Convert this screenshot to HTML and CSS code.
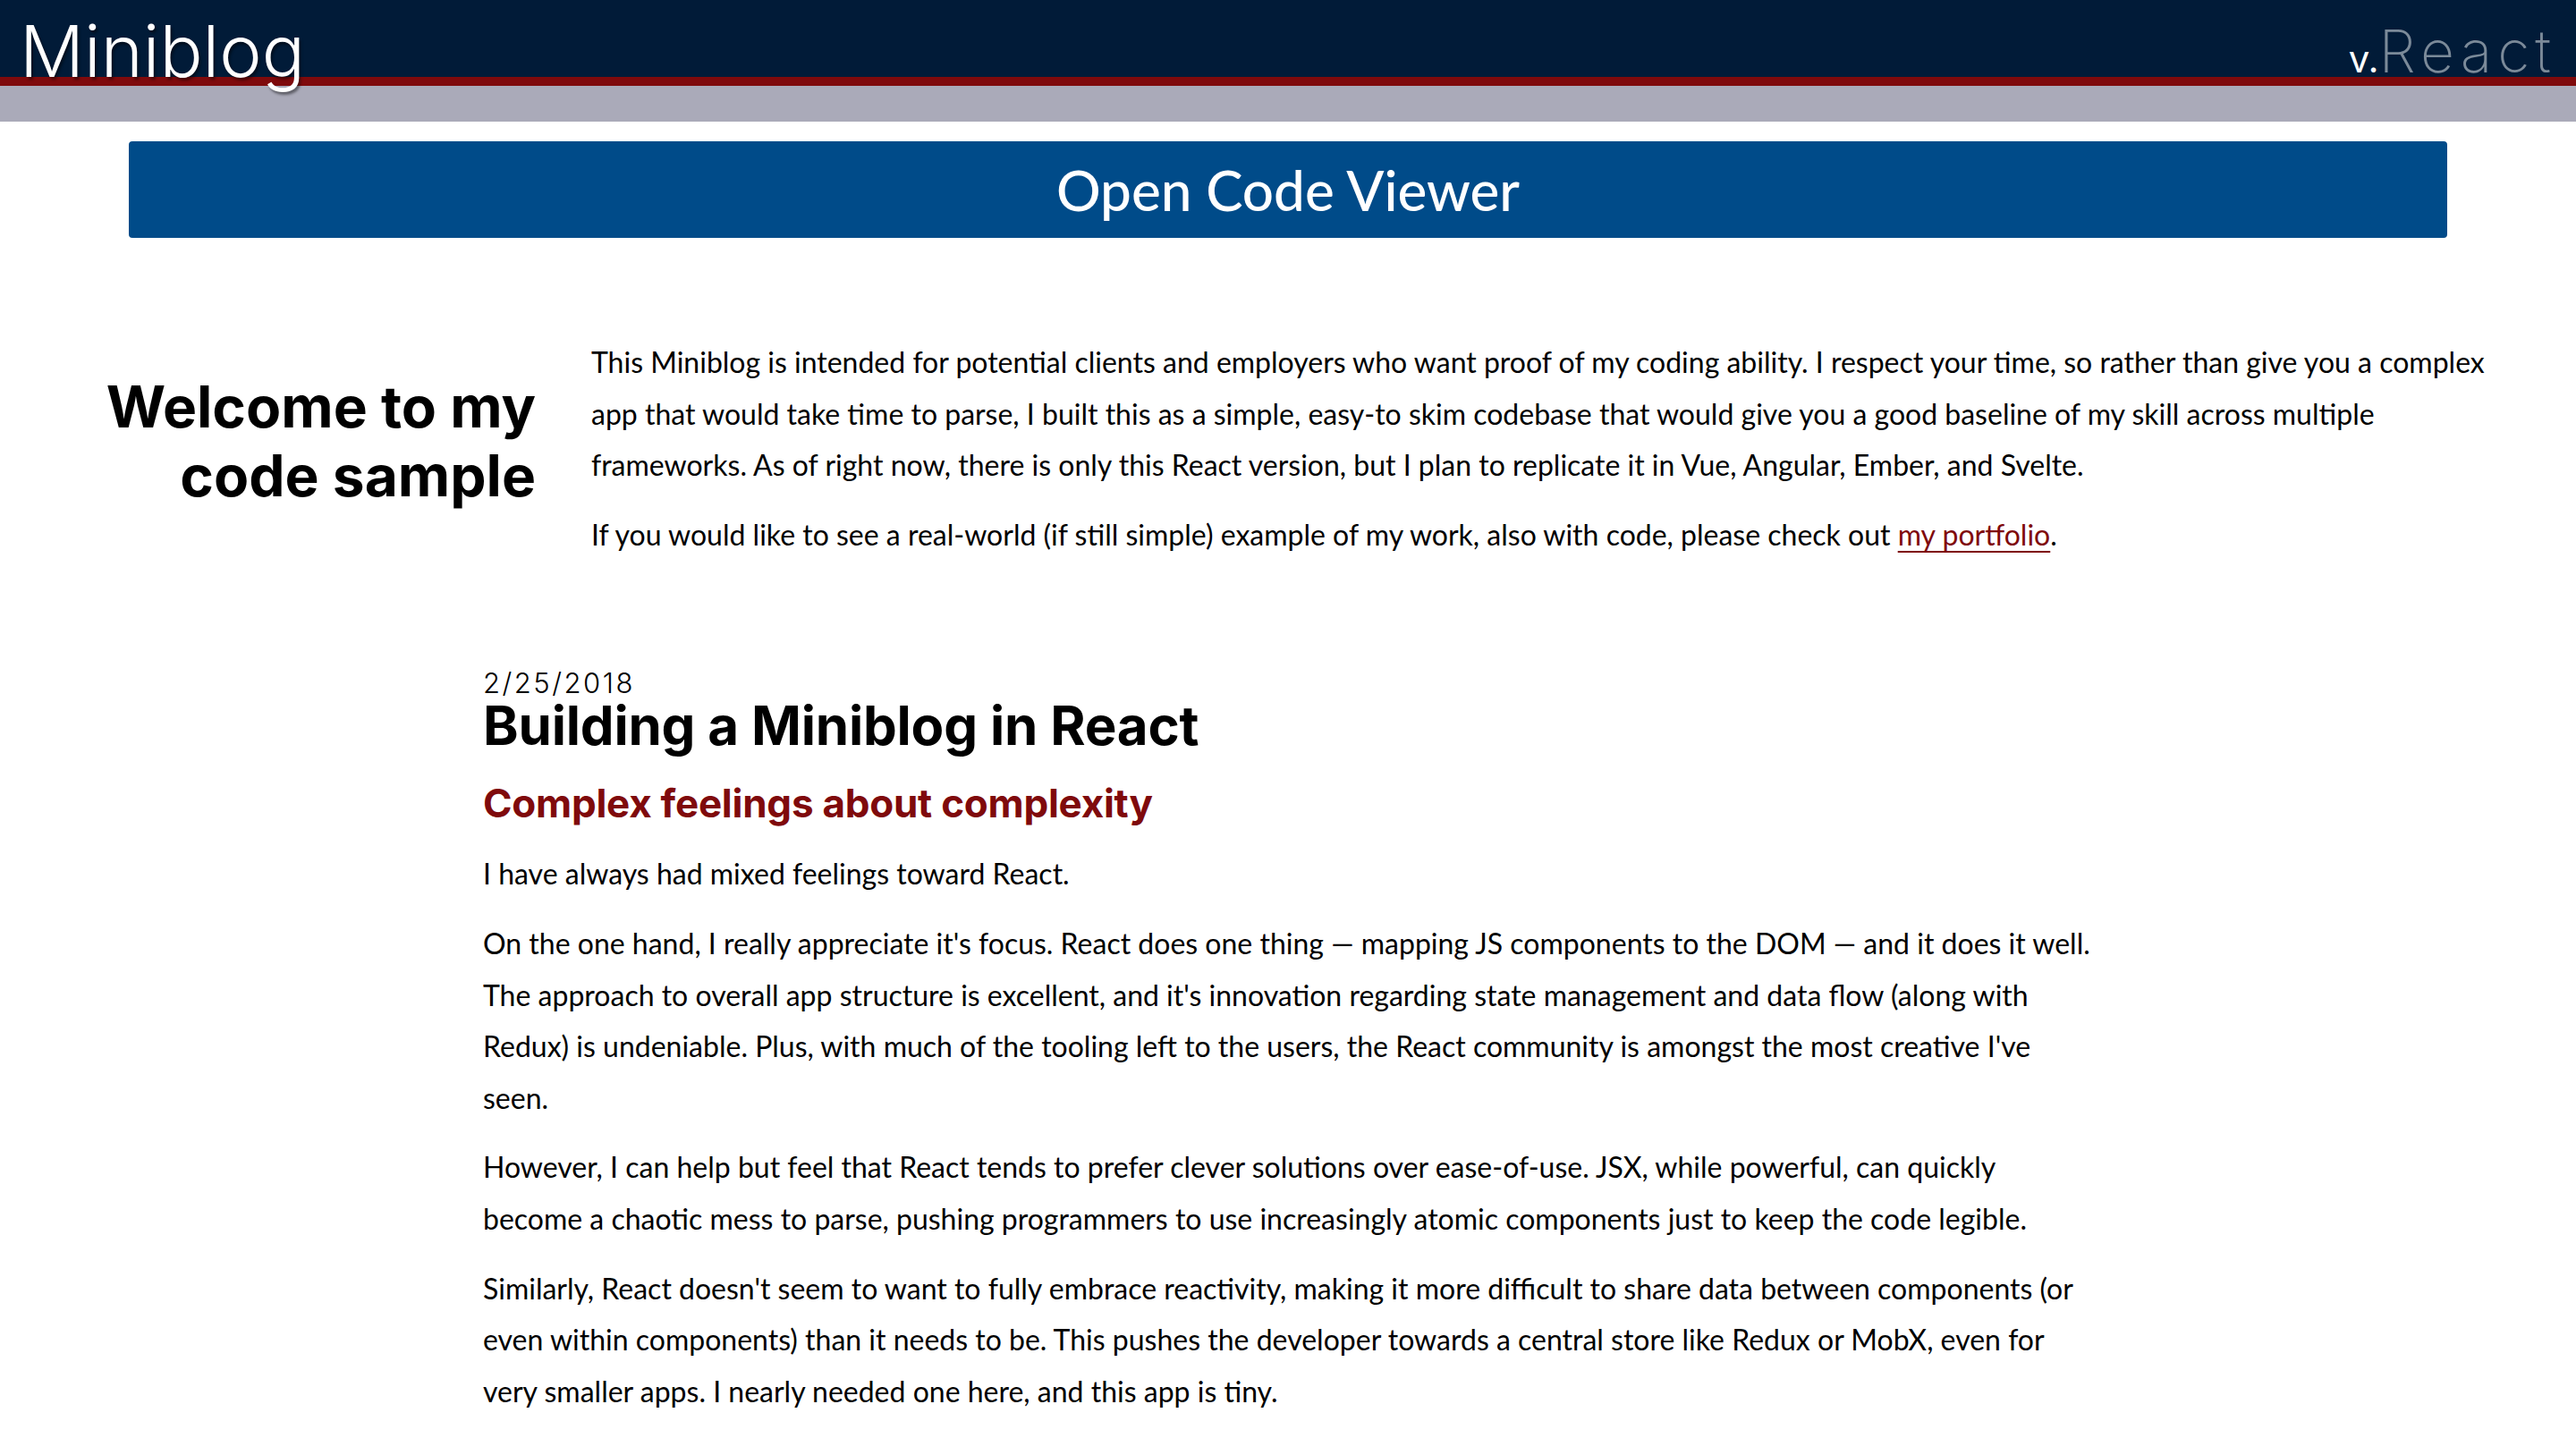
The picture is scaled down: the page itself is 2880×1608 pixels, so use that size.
FILE: index.html
```html
<!DOCTYPE html>
<html lang="en">
<head>
<meta charset="utf-8">
<title>Miniblog</title>
<link rel="stylesheet" href="styles.css">
</head>
<body>
<header class="site-header">
  <div class="topbar">
    <h1 class="brand">Miniblog</h1>
    <div class="version"><span class="version-v">v.</span><span class="version-fw">React</span></div>
  </div>
  <div class="band-red"></div>
  <div class="band-grey"></div>
</header>
<main class="page">
  <button class="code-btn" type="button">Open Code Viewer</button>
  <section class="intro">
    <h2 class="intro-title">Welcome to my<br>code sample</h2>
    <div class="intro-text">
      <p>This Miniblog is intended for potential clients and employers who want proof of my coding ability. I respect your time, so rather than give you a complex app that would take time to parse, I built this as a simple, easy-to skim codebase that would give you a good baseline of my skill across multiple frameworks. As of right now, there is only this React version, but I plan to replicate it in Vue, Angular, Ember, and Svelte.</p>
      <p>If you would like to see a real-world (if still simple) example of my work, also with code, please check out <a class="link" href="#">my portfolio</a>.</p>
    </div>
  </section>
  <article class="post">
    <div class="post-date">2/25/2018</div>
    <h2 class="post-title">Building a Miniblog in React</h2>
    <h3 class="post-sub">Complex feelings about complexity</h3>
    <p>I have always had mixed feelings toward React.</p>
    <p>On the one hand, I really appreciate it's focus. React does one thing &mdash; mapping JS components to the DOM &mdash; and it does it well. The approach to overall app structure is excellent, and it's innovation regarding state management and data flow (along with Redux) is undeniable. Plus, with much of the tooling left to the users, the React community is amongst the most creative I've seen.</p>
    <p>However, I can help but feel that React tends to prefer clever solutions over ease-of-use. JSX, while powerful, can quickly become a chaotic mess to parse, pushing programmers to use increasingly atomic components just to keep the code legible.</p>
    <p>Similarly, React doesn't seem to want to fully embrace reactivity, making it more difficult to share data between components (or even within components) than it needs to be. This pushes the developer towards a central store like Redux or MobX, even for very smaller apps. I nearly needed one here, and this app is tiny.</p>
  </article>
</main>
</body>
</html>
```

FILE: styles.css
```css
html, body {
  margin: 0;
  padding: 0;
  background: #ffffff;
}

body {
  font-family: "Lato", "Liberation Sans", sans-serif;
  font-size: 32px;
  line-height: 1.8;
  color: #000000;
}

.site-header {
  display: flex;
  flex-direction: column;
}

.topbar {
  height: 86px;
  background: #011b38;
  display: flex;
  justify-content: space-between;
  align-items: flex-end;
  padding: 0 22px 0 22px;
}

.brand {
  margin: 0 0 -11px 0;
  font-family: "Inter", "Lato", sans-serif;
  font-weight: 300;
  font-size: 80px;
  line-height: 1;
  color: #ffffff;
  letter-spacing: 0;
  text-shadow: 2px 3px 3px rgba(0, 0, 0, 0.45);
  position: relative;
  z-index: 1;
}

.version {
  margin: 0 0 -4px 0;
  line-height: 1;
  font-family: "Inter", "Lato", sans-serif;
  font-weight: 200;
}

.version-v {
  font-size: 42px;
  font-weight: 400;
  color: #ffffff;
}

.version-fw {
  font-size: 66px;
  color: #7b8a99;
  letter-spacing: 6px;
}

.band-red {
  height: 10px;
  background: #7f0a0c;
}

.band-grey {
  height: 40px;
  background: #aaaab9;
}

.page {
  display: flex;
  flex-direction: column;
}

.code-btn {
  display: block;
  width: 90%;
  height: 108px;
  margin: 22px auto 0;
  border: none;
  border-radius: 4px;
  background: #004b89;
  color: #ffffff;
  font-family: "Lato", sans-serif;
  font-size: 62px;
  font-weight: 500;
  cursor: pointer;
}

.intro {
  display: flex;
  align-items: center;
  gap: 62px;
  margin-top: 110px;
  padding-right: 72px;
}

.intro-title {
  flex: 0 0 599px;
  margin: 0 0 14px 0;
  text-align: right;
  font-family: "Inter", "Lato", sans-serif;
  font-weight: 700;
  font-size: 64px;
  line-height: 1.2;
  letter-spacing: 0;
}

.intro-text {
  flex: 1 1 auto;
}

.intro-text p,
.post p {
  margin: 0 0 20px 0;
}

.intro-text p:last-child {
  margin-bottom: 0;
}

.link {
  color: #7f0a0c;
  text-decoration: underline;
  text-decoration-thickness: 2px;
  text-underline-offset: 6px;
}

.post {
  width: 1800px;
  margin: 122px auto 0;
}

.post-date {
  font-family: "Inter", "Lato", sans-serif;
  font-weight: 300;
  font-size: 31px;
  line-height: 1;
  letter-spacing: 2.5px;
}

.post-title {
  margin: 2px 0 0 0;
  font-family: "Inter", "Lato", sans-serif;
  font-weight: 700;
  font-size: 60px;
  line-height: 1;
  letter-spacing: -0.2px;
}

.post-sub {
  margin: 35px 0 28px 0;
  font-family: "Inter", "Lato", sans-serif;
  font-weight: 700;
  font-size: 44px;
  line-height: 1;
  color: #7f0a0c;
  letter-spacing: -0.25px;
}
```
